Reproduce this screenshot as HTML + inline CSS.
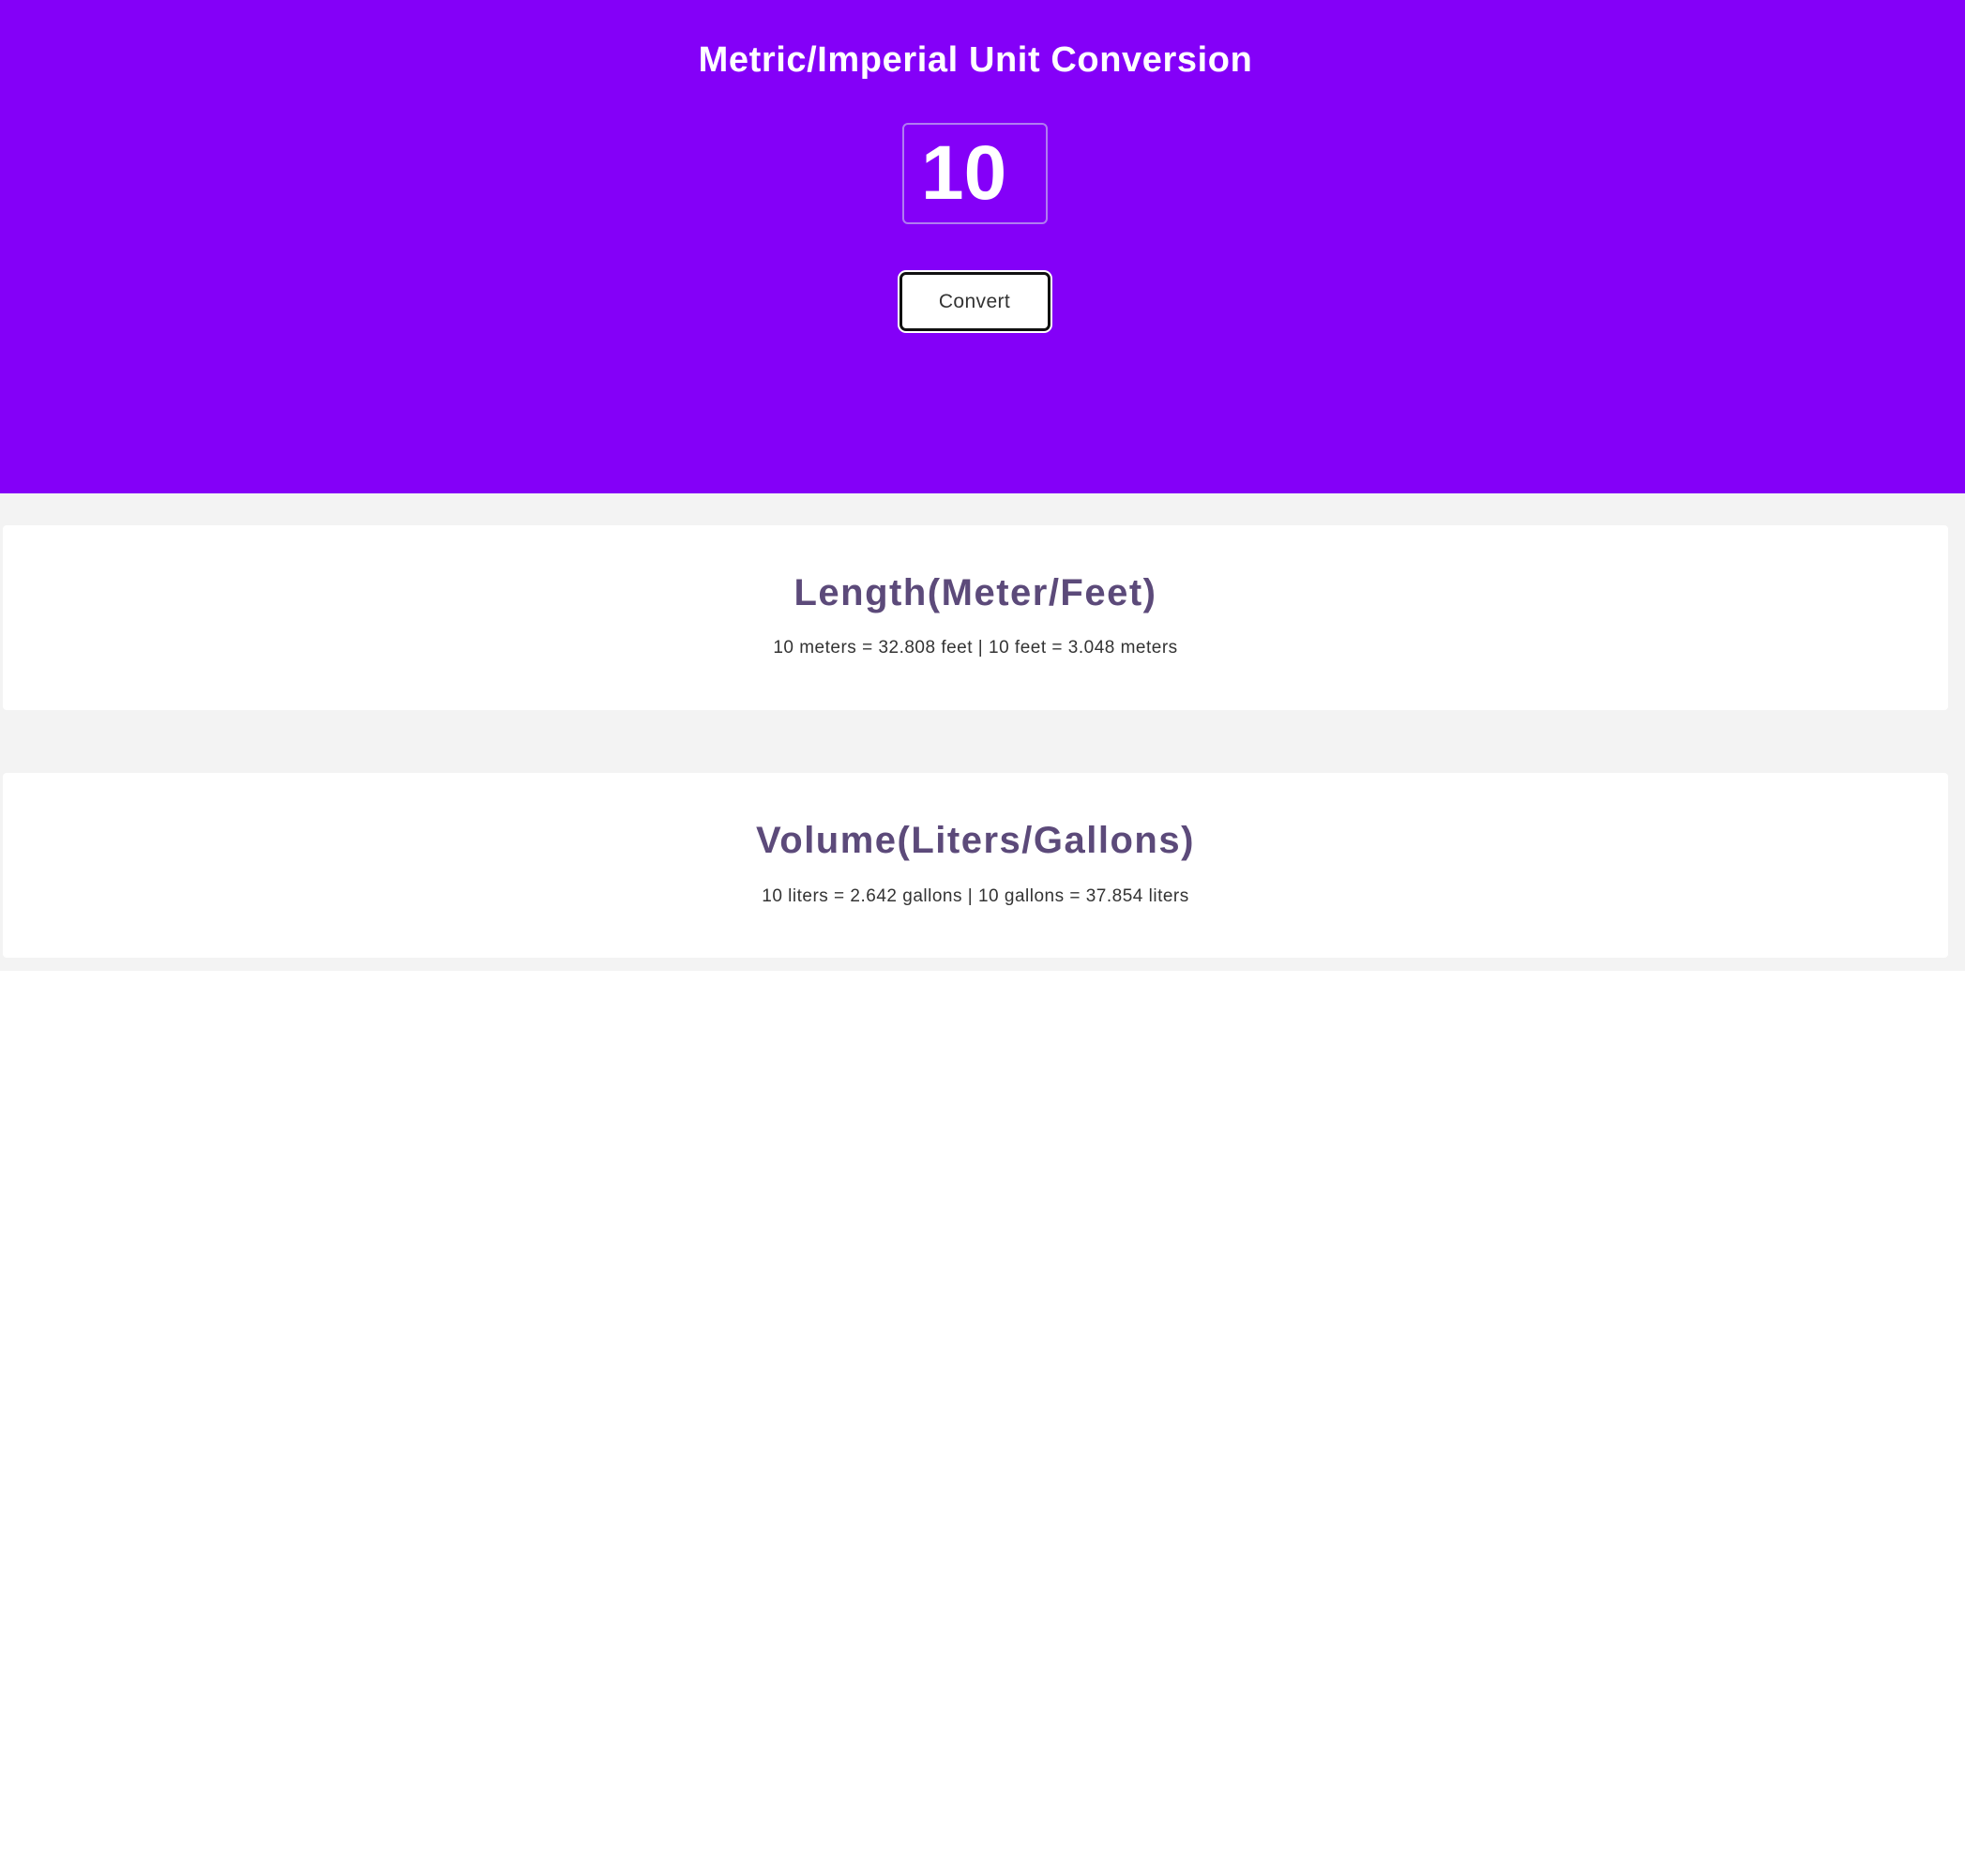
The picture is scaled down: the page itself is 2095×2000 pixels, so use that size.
<!DOCTYPE html>
<html><head><style>
body{margin:0;background:#fff;font-family:"Liberation Sans",sans-serif;width:2095px;height:2000px;position:relative;overflow:hidden}
.hdr{position:absolute;left:0;top:0;width:2095px;height:526px;background:#8400f8}
.t{position:absolute;left:0;width:2080px;text-align:center;white-space:nowrap}
.gray{position:absolute;left:0;top:526px;width:2095px;height:509px;background:#f3f3f3}
.card{position:absolute;left:3px;width:2074px;background:#fff;border-radius:4px}
.inp{position:absolute;left:962px;top:131px;width:151px;height:104px;border:2px solid #b07cf0;border-radius:6px}
.btn{position:absolute;left:959px;top:290px;width:155px;height:57px;border:3px solid #111;border-radius:7px;background:#fff;box-shadow:0 0 0 2px #fff}
h{display:block}
</style></head><body>
<div class="hdr"></div>
<div class="t" style="top:40px;font-size:38px;font-weight:bold;color:#fff;line-height:48px;letter-spacing:0.6px">Metric/Imperial Unit Conversion</div>
<div class="inp"></div>
<div style="position:absolute;left:982px;top:138px;font-size:82px;font-weight:bold;color:#fff;line-height:94px">10</div>
<div class="btn"></div>
<div class="t" style="top:308px;font-size:21px;color:#333;line-height:28px;left:-1px;letter-spacing:0.4px">Convert</div>
<div class="gray"></div>
<div class="card" style="top:560px;height:197px"></div>
<div class="card" style="top:824px;height:197px"></div>
<div class="t" style="top:608px;font-size:40px;font-weight:bold;color:#5c4a7a;line-height:48px;letter-spacing:1.5px">Length(Meter/Feet)</div>
<div class="t" style="top:679px;font-size:19px;color:#333;line-height:24px;letter-spacing:0.5px">10 meters = 32.808 feet | 10 feet = 3.048 meters</div>
<div class="t" style="top:872px;font-size:40px;font-weight:bold;color:#5c4a7a;line-height:48px;letter-spacing:1.5px">Volume(Liters/Gallons)</div>
<div class="t" style="top:944px;font-size:19px;color:#333;line-height:24px;letter-spacing:0.5px">10 liters = 2.642 gallons | 10 gallons = 37.854 liters</div>
</body></html>
